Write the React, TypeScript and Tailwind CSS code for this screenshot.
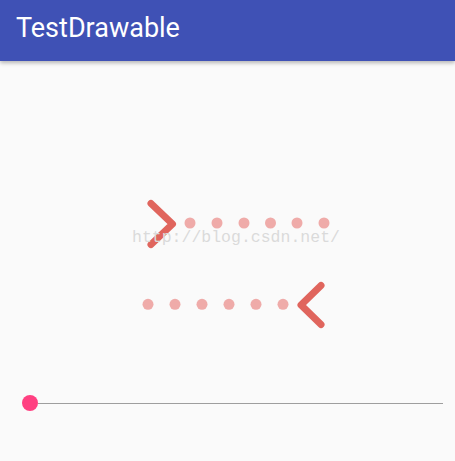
import React from "react";

const dots1 = [190, 217, 244, 270.5, 297, 324];
const dots2 = [148, 175, 202, 229, 256, 283];

export default function App() {
  return (
    <div className="w-[455px] h-[461px] bg-[#fafafa] overflow-hidden flex flex-col">
      <div className="h-[61px] shrink-0 bg-[#3f51b5] pl-[16px] pt-[8px] shadow-[0_2px_4px_rgba(0,0,0,0.28)] relative z-10">
        <span className="text-white text-[27px] leading-normal font-['Roboto',sans-serif]">TestDrawable</span>
      </div>
      <div className="relative mt-[134px] h-[55px] shrink-0">
        <svg width="455" height="55" viewBox="0 195 455 55" className="block">
          <polyline points="151,203.5 172.5,224 151,244.5" fill="none" stroke="#e0655d" strokeWidth="7" strokeLinecap="round" strokeLinejoin="round" />
          {dots1.map((x) => (
            <circle key={x} cx={x} cy={223} r={5.5} fill="#efaba9" />
          ))}
        </svg>
        <div className="absolute left-[132px] top-[35px] text-[16.5px] leading-none text-[#dadada] font-['Liberation_Mono',monospace] whitespace-nowrap">
          http://blog.csdn.net/
        </div>
      </div>
      <div className="mt-[30px] h-[50px] shrink-0">
        <svg width="455" height="50" viewBox="0 280 455 50" className="block">
          {dots2.map((x) => (
            <circle key={x} cx={x} cy={304.3} r={5.5} fill="#efaba9" />
          ))}
          <polyline points="321,285.5 301,305 321,324.5" fill="none" stroke="#e0655d" strokeWidth="7" strokeLinecap="round" strokeLinejoin="round" />
        </svg>
      </div>
      <div className="mt-[64.5px] h-4 shrink-0 flex items-center pl-[22px] pr-[12px]">
        <div className="w-4 h-4 rounded-full bg-[#ff4081] shrink-0" />
        <div className="flex-1 h-px bg-[#9e9e9e] mt-px" />
      </div>
    </div>
  );
}
